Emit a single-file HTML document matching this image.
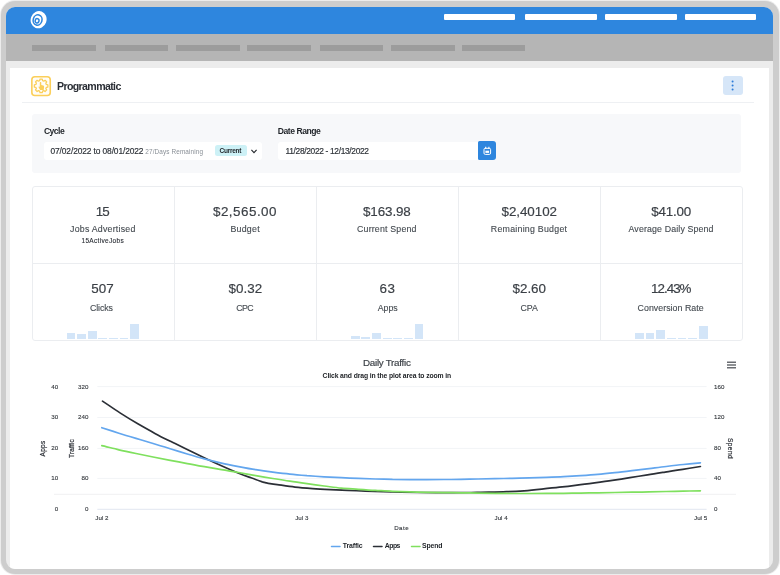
<!DOCTYPE html>
<html lang="en">
<head>
<meta charset="utf-8">
<title>Programmatic</title>
<style>
*{box-sizing:border-box;margin:0;padding:0}
html,body{width:780px;height:575px;overflow:hidden;background:#fff}
body{font-family:"Liberation Sans",sans-serif;color:#3a3f45;position:relative}
.frame{position:absolute;left:1px;top:1px;width:778px;height:573px;border-radius:14px;background:#cdcdcd;box-shadow:0 0 0 1px #ececec}
.screen{position:absolute;left:6px;top:6.5px;width:767px;height:562px;border-radius:9px;background:#ececec;overflow:hidden}
.topbar{position:absolute;left:0;top:0;width:100%;height:27.5px;background:#2e86de}
.topbar i{position:absolute;top:7.8px;height:5.5px;width:71.5px;background:#fff;border-radius:1px}
.navbar{position:absolute;left:0;top:27.5px;width:100%;height:26.7px;background:#b5b5b5}
.navbar i{position:absolute;top:11.2px;height:6.1px;width:63.6px;background:#9c9c9c}
.card{position:absolute;left:4px;top:61.3px;width:759px;height:501px;background:#fff}
.content{position:absolute;left:0;top:0;width:780px;height:575px;will-change:transform}
.content>div,.content>svg{position:absolute}
.t{position:absolute;white-space:nowrap;line-height:1}
.m{-webkit-text-stroke:0.18px currentColor}
.m2{-webkit-text-stroke:0.12px currentColor}
.logo{left:28px;top:9px;width:22px;height:22px}
.picon{left:30px;top:74.5px}
.menu{left:723.2px;top:76.2px;width:19.4px;height:19.3px;border-radius:3px;background:#d6e6f8}
.hr{left:22px;top:102.2px;width:732px;height:1px;background:#eef0f3}
.filters{left:31.7px;top:114.3px;width:709.3px;height:59px;border-radius:3px;background:#f7f8fa}
.select{left:44.3px;top:141.7px;width:217.7px;height:18.3px;border-radius:3px;background:#fff}
.badge{left:215.3px;top:145.4px;width:32px;height:10.7px;border-radius:2.5px;background:#cdf1f6}
.dinput{left:278.4px;top:141.6px;width:199.6px;height:18.4px;border-radius:3px 0 0 3px;background:#fff}
.dbtn{left:477.5px;top:141.3px;width:18.8px;height:18.8px;border-radius:1.5px 3px 3px 1.5px;background:#2e86de}
.stats{left:31.5px;top:185.5px;width:711px;height:155.6px;border:1px solid #ebedf0;border-radius:3px}
.stats b{position:absolute;background:#ebedf0}
.stats b.v{top:0;width:1px;height:100%}
.stats b.h{left:0;height:1px;width:100%;top:76px}
.bars i{position:absolute;width:8.9px;background:#d3e5f8}
</style>
</head>
<body>
<div class="frame"></div>
<div class="screen">
  <div class="topbar">
    <i style="left:437.8px"></i><i style="left:519.1px"></i><i style="left:599px"></i><i style="left:678.8px"></i>
  </div>
  <div class="navbar">
    <i style="left:26.3px"></i><i style="left:98.5px"></i><i style="left:170.3px"></i><i style="left:241.1px"></i><i style="left:313.8px"></i><i style="left:385px"></i><i style="left:455.7px"></i>
  </div>
  <div class="card"></div>
</div>
<div class="content">
  <svg class="logo" viewBox="28 9 22 22">
    <ellipse cx="38.6" cy="19.7" rx="7.9" ry="8.7" transform="rotate(20 38.6 19.75)" fill="#fff"/>
    <ellipse cx="37.6" cy="20" rx="4.4" ry="5.2" transform="rotate(15 37.6 20)" fill="none" stroke="#2e86de" stroke-width="1.6"/>
    <ellipse cx="37.1" cy="20.8" rx="1.9" ry="2.2" transform="rotate(15 37.1 20.8)" fill="none" stroke="#2e86de" stroke-width="1.5"/>
  </svg>
  <svg class="picon" viewBox="0 0 22 22" width="22" height="22">
    <rect x="1.85" y="1.7" width="18.4" height="18.8" rx="3" fill="#fffdf8" stroke="#fbcf5a" stroke-width="1.6"/>
    <g transform="translate(2.95 2.35) scale(0.815)">
      <path d="M8.6 2.2h2.8l.4 1.9 1.5.6 1.6-1.1 2 2-1.1 1.6.6 1.5 1.9.4v2.8l-1.9.4-.6 1.5 1.1 1.6-2 2-1.6-1.1-1.5.6-.4 1.9H8.6l-.4-1.9-1.5-.6-1.6 1.1-2-2 1.1-1.6-.6-1.5-1.9-.4V9.1l1.9-.4.6-1.5-1.1-1.6 2-2 1.6 1.1 1.5-.6z" fill="none" stroke="#fbcf5a" stroke-width="1.55" stroke-linejoin="round"/>
      <path d="M9.2 5.8c.8 0 1 .5 1 1v2.6l2.6.6c.7.2 1 .7.9 1.4l-.5 4H8.8L6.9 12c-.3-.6.3-1.1.9-.7l.6.5V6.8c0-.5.2-1 .8-1z" fill="#fbcf5a"/>
    </g>
  </svg>
  <div class="menu">
    <svg viewBox="0 0 19.4 19.3" width="19.4" height="19.3"><circle cx="9.6" cy="5.5" r="1" fill="#2b7cd9"/><circle cx="9.6" cy="9.5" r="1" fill="#2b7cd9"/><circle cx="9.6" cy="13.5" r="1" fill="#2b7cd9"/></svg>
  </div>
  <div class="hr"></div>
  <div class="filters"></div>
  <div class="select"></div>
  <div class="badge"></div>
  <svg style="left:249px;top:147px" width="10" height="8" viewBox="249 147 10 8"><path d="M251.4 149.9l2.6 2.7 2.6-2.7" fill="none" stroke="#22262b" stroke-width="1.1"/></svg>
  <div class="dinput"></div>
  <div class="dbtn">
    <svg viewBox="0 0 19 18.8" width="19" height="18.8"><rect x="6" y="7.3" width="6.6" height="6.1" rx="1.3" fill="none" stroke="#fff" stroke-width="1"/><path d="M7.7 5.8v2.3M10.9 5.8v2.3" stroke="#fff" stroke-width="1.1"/><rect x="7.4" y="9.7" width="3.7" height="2.2" fill="#fff"/></svg>
  </div>
  <div class="stats">
    <b class="v" style="left:141px"></b><b class="v" style="left:283px"></b><b class="v" style="left:425px"></b><b class="v" style="left:567px"></b><b class="h"></b>
  </div>
  <div class="bars" style="left:0;top:0"><i style="left:66.5px;top:333.3px;height:5.5px"></i><i style="left:77.1px;top:334px;height:4.8px"></i><i style="left:87.7px;top:330.8px;height:8px"></i><i style="left:98.4px;top:337.8px;height:1px"></i><i style="left:109px;top:337.8px;height:1px"></i><i style="left:119.6px;top:337.8px;height:1px"></i><i style="left:130.2px;top:324px;height:14.8px"></i><i style="left:350.8px;top:336.4px;height:2.4px"></i><i style="left:361.4px;top:337.1px;height:1.7px"></i><i style="left:372px;top:333.4px;height:5.4px"></i><i style="left:382.7px;top:337.8px;height:1px"></i><i style="left:393.3px;top:337.8px;height:1px"></i><i style="left:403.9px;top:337.8px;height:1px"></i><i style="left:414.5px;top:324.2px;height:14.6px"></i><i style="left:635px;top:333px;height:5.8px"></i><i style="left:645.6px;top:333px;height:5.8px"></i><i style="left:656.2px;top:329.8px;height:9px"></i><i style="left:666.9px;top:337.8px;height:1px"></i><i style="left:677.5px;top:337.8px;height:1px"></i><i style="left:688.1px;top:337.8px;height:1px"></i><i style="left:698.7px;top:325.5px;height:13.3px"></i></div>
  <svg style="left:0;top:345px" width="780" height="220" viewBox="0 345 780 220">
    <g stroke="#f2f4f7" stroke-width="1"><line x1="97.3" x2="706.6" y1="386.6" y2="386.6"/><line x1="97.3" x2="706.6" y1="417.5" y2="417.5"/><line x1="97.3" x2="706.6" y1="448.4" y2="448.4"/><line x1="97.3" x2="706.6" y1="478.4" y2="478.4"/><line x1="97.3" x2="706.6" y1="509.3" y2="509.3" stroke="#e2e6f1"/></g>
    <line x1="54" x2="736" y1="494.3" y2="494.3" stroke="#f0f1f2" stroke-width="1"/>
    <path d="M102.5 401.1C105.4 403 114.1 409.1 120 412.9C125.8 416.6 131.6 420.2 137.4 423.6C143.3 427 149.1 430.3 154.9 433.4C160.7 436.6 166.5 439.4 172.4 442.3C178.2 445.2 184 448 189.8 450.8C195.7 453.7 201.5 456.5 207.3 459.2C213.1 462 219.3 464.8 224.8 467.2C230.2 469.6 235.6 472 240 473.8C244.4 475.6 247.3 476.5 251 477.8C254.7 479.1 260.4 481.2 262.3 481.9C262.9 482 264.7 482.5 266 482.8C267.3 483.1 268.1 483.3 270 483.6C271.9 483.9 273.2 484.1 277.3 484.6C281.5 485.2 289.1 486.4 295 487.1C300.8 487.8 306.7 488.2 312.6 488.6C318.5 489 324.3 489.3 330.2 489.6C336.1 489.9 342 490.1 347.8 490.4C353.7 490.6 359.6 490.9 365.5 491.1C371.3 491.3 377.2 491.5 383.1 491.7C389 491.9 394.8 492 400.7 492.2C406.6 492.3 412.5 492.4 418.4 492.5C424.2 492.6 430.1 492.6 436 492.6C441.9 492.7 447.7 492.6 453.6 492.6C459.5 492.5 465.4 492.5 471.2 492.5C477.1 492.4 483 492.4 488.9 492.2C494.7 492.1 500.6 492 506.5 491.7C512.4 491.5 518.2 491.2 524.1 490.8C530 490.3 535.9 489.7 541.7 489.1C547.6 488.5 553.5 487.9 559.4 487.2C565.3 486.6 571.1 485.9 577 485.1C582.9 484.4 588.8 483.6 594.6 482.8C600.5 482 606.4 481.2 612.3 480.3C618.1 479.5 624 478.6 629.9 477.6C635.8 476.7 641.6 475.8 647.5 474.9C653.4 473.9 659.3 473 665.1 472.1C671 471.1 676.9 470.2 682.8 469.3C688.6 468.4 697.5 467 700.4 466.5" fill="none" stroke="#2b2f36" stroke-width="1.7" stroke-linecap="round"/>
    <path d="M101.8 427.7C104.7 428.6 113.2 431.4 118.9 433.2C124.6 435 130.3 436.7 136 438.4C141.7 440.1 147.4 441.8 153.1 443.5C158.8 445.2 164.5 447 170.2 448.8C175.9 450.5 181.6 452.3 187.3 454C193 455.7 198.7 457.4 204.4 458.9C210.1 460.4 215.8 461.8 221.5 463.1C227.2 464.4 232.9 465.5 238.6 466.6C244.3 467.7 250 468.8 255.7 469.7C261.4 470.7 267.1 471.5 272.8 472.2C278.5 472.9 284.2 473.6 289.9 474.1C295.6 474.7 301.3 475.2 307 475.7C312.7 476.1 318.4 476.4 324.1 476.8C329.8 477.1 335.5 477.4 341.2 477.7C346.9 477.9 352.6 478.2 358.3 478.4C364 478.6 369.7 478.8 375.4 479C381.1 479.1 386.8 479.3 392.5 479.4C398.2 479.4 404 479.5 409.7 479.6C415.4 479.6 421.1 479.6 426.8 479.6C432.5 479.6 438.2 479.6 443.9 479.5C449.6 479.5 455.3 479.4 461 479.3C466.7 479.2 472.4 479.1 478.1 479C483.8 478.9 489.5 478.8 495.2 478.7C500.9 478.6 506.6 478.4 512.3 478.3C518 478.1 523.7 478 529.4 477.9C535.1 477.7 540.8 477.5 546.5 477.3C552.2 477.1 557.9 476.9 563.6 476.6C569.3 476.4 575 476.1 580.7 475.7C586.4 475.3 592.1 474.9 597.8 474.4C603.5 473.9 609.2 473.3 614.9 472.7C620.6 472.1 626.3 471.4 632 470.7C637.7 470 643.4 469.3 649.1 468.6C654.8 467.9 660.5 467.1 666.2 466.5C671.9 465.8 677.6 465.1 683.3 464.5C689 463.9 697.5 463.1 700.4 462.8" fill="none" stroke="#63a6ee" stroke-width="1.7" stroke-linecap="round"/>
    <path d="M101.8 445.7C104.7 446.3 113.2 448.5 118.9 449.8C124.6 451.1 130.3 452.3 136 453.5C141.7 454.7 147.4 455.8 153.1 457C158.8 458.1 164.5 459.2 170.2 460.3C175.9 461.4 181.6 462.5 187.3 463.6C193 464.7 198.7 465.7 204.4 466.7C210.1 467.7 215.8 468.7 221.5 469.7C227.2 470.7 232.9 471.5 238.6 472.5C244.3 473.5 250 474.6 255.7 475.6C261.4 476.6 267.1 477.5 272.8 478.5C278.5 479.4 284.2 480.3 289.9 481.1C295.6 482 301.3 482.8 307 483.6C312.7 484.4 318.4 485.2 324.1 486C329.8 486.7 335.5 487.5 341.2 488.1C346.9 488.6 352.6 488.9 358.3 489.3C364 489.7 369.7 490.1 375.4 490.4C381.1 490.7 386.8 491.1 392.5 491.3C398.2 491.6 404 491.8 409.7 491.9C415.4 492.1 421.1 492.2 426.8 492.3C432.5 492.4 438.2 492.5 443.9 492.6C449.6 492.7 455.3 492.7 461 492.8C466.7 492.9 472.4 493 478.1 493.1C483.8 493.2 489.5 493.3 495.2 493.4C500.9 493.4 506.6 493.5 512.3 493.5C518 493.5 523.7 493.5 529.4 493.5C535.1 493.5 540.8 493.5 546.5 493.4C552.2 493.4 557.9 493.4 563.6 493.3C569.3 493.2 575 493.2 580.7 493.1C586.4 493 592.1 492.9 597.8 492.8C603.5 492.7 609.2 492.6 614.9 492.5C620.6 492.4 626.3 492.3 632 492.2C637.7 492.1 643.4 492 649.1 491.8C654.8 491.7 660.5 491.6 666.2 491.5C671.9 491.4 677.6 491.2 683.3 491.1C689 491 697.5 490.8 700.4 490.8" fill="none" stroke="#7fe05e" stroke-width="1.7" stroke-linecap="round"/>
    <g stroke="#44484e" stroke-width="1.2"><line x1="727" x2="736" y1="362.2" y2="362.2"/><line x1="727" x2="736" y1="365" y2="365"/><line x1="727" x2="736" y1="367.8" y2="367.8"/></g>
    <g stroke-width="1.5" stroke-linecap="round"><line x1="331.5" x2="340" y1="546.4" y2="546.4" stroke="#63a6ee"/><line x1="373.5" x2="382" y1="546.4" y2="546.4" stroke="#2b2f36"/><line x1="411.5" x2="420" y1="546.4" y2="546.4" stroke="#7fe05e"/></g>
    <g font-family="Liberation Sans, sans-serif" font-size="6.5" fill="#2b2f36" stroke="#2b2f36" stroke-width="0.2" text-anchor="middle">
      <text transform="translate(45.1 448.6) rotate(-90)" textLength="15.7">Apps</text>
      <text transform="translate(73.6 448.6) rotate(-90)" textLength="18.8">Traffic</text>
      <text transform="translate(728.4 448.3) rotate(90)" textLength="20.5">Spend</text>
    </g>
  </svg>
<span class="t" style="left:57.00px;top:80.63px;font-size:10.6px;font-weight:700;color:#2b2f36;letter-spacing:-0.632px">Programmatic</span>
<span class="t" style="left:43.90px;top:126.62px;font-size:8.6px;font-weight:700;color:#1f2328;letter-spacing:-0.534px">Cycle</span>
<span class="t" style="left:277.80px;top:126.62px;font-size:8.6px;font-weight:700;color:#1f2328;letter-spacing:-0.476px">Date Range</span>
<span class="t m" style="left:50.50px;top:147.19px;font-size:8.4px;font-weight:400;color:#2f343a;letter-spacing:-0.108px">07/02/2022 to 08/01/2022</span>
<span class="t" style="left:145.30px;top:148.78px;font-size:6.4px;font-weight:400;color:#8a9097;letter-spacing:0.120px">27/Days Remaining</span>
<span class="t" style="left:219.50px;top:147.80px;font-size:6.5px;font-weight:700;color:#1f2328;letter-spacing:-0.247px">Current</span>
<span class="t m" style="left:285.50px;top:147.19px;font-size:8.4px;font-weight:400;color:#2f343a;letter-spacing:-0.325px">11/28/2022 - 12/13/2022</span>
<span class="t m" style="left:95.85px;top:205.46px;font-size:13.4px;font-weight:400;color:#3a3f45;letter-spacing:-1.005px">15</span>
<span class="t m" style="left:213.00px;top:205.46px;font-size:13.4px;font-weight:400;color:#3a3f45;letter-spacing:0.490px">$2,565.00</span>
<span class="t m" style="left:363.00px;top:205.46px;font-size:13.4px;font-weight:400;color:#3a3f45;letter-spacing:-0.101px">$163.98</span>
<span class="t m" style="left:501.50px;top:205.46px;font-size:13.4px;font-weight:400;color:#3a3f45;letter-spacing:-0.051px">$2,40102</span>
<span class="t m" style="left:651.30px;top:205.46px;font-size:13.4px;font-weight:400;color:#3a3f45;letter-spacing:-0.194px">$41.00</span>
<span class="t m" style="left:91.20px;top:281.86px;font-size:13.4px;font-weight:400;color:#3a3f45;letter-spacing:0.128px">507</span>
<span class="t m" style="left:228.50px;top:281.86px;font-size:13.4px;font-weight:400;color:#3a3f45;letter-spacing:0.071px">$0.32</span>
<span class="t m" style="left:379.60px;top:281.86px;font-size:13.4px;font-weight:400;color:#3a3f45;letter-spacing:0.494px">63</span>
<span class="t m" style="left:512.49px;top:281.86px;font-size:13.4px;font-weight:400;color:#3a3f45;letter-spacing:0.000px">$2.60</span>
<span class="t m" style="left:651.10px;top:281.86px;font-size:13.4px;font-weight:400;color:#3a3f45;letter-spacing:-1.005px">12.43%</span>
<span class="t m2" style="left:70.00px;top:224.65px;font-size:8.8px;font-weight:400;color:#444a50;letter-spacing:0.235px">Jobs Advertised</span>
<span class="t m2" style="left:230.40px;top:224.65px;font-size:8.8px;font-weight:400;color:#444a50;letter-spacing:0.262px">Budget</span>
<span class="t m2" style="left:357.00px;top:224.65px;font-size:8.8px;font-weight:400;color:#444a50;letter-spacing:0.190px">Current Spend</span>
<span class="t m2" style="left:490.80px;top:224.65px;font-size:8.8px;font-weight:400;color:#444a50;letter-spacing:0.254px">Remaining Budget</span>
<span class="t m2" style="left:628.50px;top:224.65px;font-size:8.8px;font-weight:400;color:#444a50;letter-spacing:0.140px">Average Daily Spend</span>
<span class="t m2" style="left:90.00px;top:303.55px;font-size:8.8px;font-weight:400;color:#444a50;letter-spacing:-0.094px">Clicks</span>
<span class="t m2" style="left:236.37px;top:303.55px;font-size:8.8px;font-weight:400;color:#444a50;letter-spacing:-0.660px">CPC</span>
<span class="t m2" style="left:377.70px;top:303.55px;font-size:8.8px;font-weight:400;color:#444a50;letter-spacing:-0.021px">Apps</span>
<span class="t m2" style="left:520.53px;top:303.55px;font-size:8.8px;font-weight:400;color:#444a50;letter-spacing:0.000px">CPA</span>
<span class="t m2" style="left:637.60px;top:303.55px;font-size:8.8px;font-weight:400;color:#444a50;letter-spacing:0.033px">Conversion Rate</span>
<span class="t m2" style="left:81.50px;top:238.20px;font-size:6.5px;font-weight:400;color:#2b2f36;letter-spacing:0.321px">15ActiveJobs</span>
<span class="t m" style="left:363.00px;top:357.70px;font-size:9.8px;font-weight:400;color:#3a3f45;letter-spacing:-0.267px">Daily Traffic</span>
<span class="t" style="left:322.60px;top:373.24px;font-size:6.8px;font-weight:700;color:#222529;letter-spacing:-0.106px">Click and drag in the plot area to zoom in</span>
<span class="t m2" style="left:51.21px;top:384.35px;font-size:6.2px;font-weight:400;color:#33373c;letter-spacing:0.000px">40</span>
<span class="t m2" style="left:51.21px;top:414.05px;font-size:6.2px;font-weight:400;color:#33373c;letter-spacing:0.000px">30</span>
<span class="t m2" style="left:51.21px;top:444.85px;font-size:6.2px;font-weight:400;color:#33373c;letter-spacing:0.000px">20</span>
<span class="t m2" style="left:51.21px;top:474.95px;font-size:6.2px;font-weight:400;color:#33373c;letter-spacing:0.000px">10</span>
<span class="t m2" style="left:54.65px;top:505.65px;font-size:6.2px;font-weight:400;color:#33373c;letter-spacing:0.000px">0</span>
<span class="t m2" style="left:78.07px;top:384.35px;font-size:6.2px;font-weight:400;color:#33373c;letter-spacing:0.000px">320</span>
<span class="t m2" style="left:78.07px;top:414.05px;font-size:6.2px;font-weight:400;color:#33373c;letter-spacing:0.000px">240</span>
<span class="t m2" style="left:78.07px;top:444.85px;font-size:6.2px;font-weight:400;color:#33373c;letter-spacing:0.000px">160</span>
<span class="t m2" style="left:81.51px;top:474.95px;font-size:6.2px;font-weight:400;color:#33373c;letter-spacing:0.000px">80</span>
<span class="t m2" style="left:84.95px;top:505.65px;font-size:6.2px;font-weight:400;color:#33373c;letter-spacing:0.000px">0</span>
<span class="t m2" style="left:714.10px;top:384.35px;font-size:6.2px;font-weight:400;color:#33373c;letter-spacing:0.000px">160</span>
<span class="t m2" style="left:714.10px;top:414.05px;font-size:6.2px;font-weight:400;color:#33373c;letter-spacing:0.000px">120</span>
<span class="t m2" style="left:714.10px;top:444.85px;font-size:6.2px;font-weight:400;color:#33373c;letter-spacing:0.000px">80</span>
<span class="t m2" style="left:714.10px;top:474.95px;font-size:6.2px;font-weight:400;color:#33373c;letter-spacing:0.000px">40</span>
<span class="t m2" style="left:714.10px;top:505.65px;font-size:6.2px;font-weight:400;color:#33373c;letter-spacing:0.000px">0</span>
<span class="t m2" style="left:95.36px;top:514.55px;font-size:6.2px;font-weight:400;color:#33373c;letter-spacing:0.000px">Jul 2</span>
<span class="t m2" style="left:295.26px;top:514.55px;font-size:6.2px;font-weight:400;color:#33373c;letter-spacing:0.000px">Jul 3</span>
<span class="t m2" style="left:494.56px;top:514.55px;font-size:6.2px;font-weight:400;color:#33373c;letter-spacing:0.000px">Jul 4</span>
<span class="t m2" style="left:694.06px;top:514.55px;font-size:6.2px;font-weight:400;color:#33373c;letter-spacing:0.000px">Jul 5</span>
<span class="t m2" style="left:394.20px;top:524.65px;font-size:6.2px;font-weight:400;color:#33373c;letter-spacing:0.441px">Date</span>
<span class="t" style="left:342.80px;top:543.46px;font-size:6.9px;font-weight:700;color:#1f2328;letter-spacing:-0.131px">Traffic</span>
<span class="t" style="left:384.76px;top:543.46px;font-size:6.9px;font-weight:700;color:#1f2328;letter-spacing:-0.517px">Apps</span>
<span class="t" style="left:422.00px;top:543.46px;font-size:6.9px;font-weight:700;color:#1f2328;letter-spacing:-0.166px">Spend</span>
</div>
</body>
</html>
